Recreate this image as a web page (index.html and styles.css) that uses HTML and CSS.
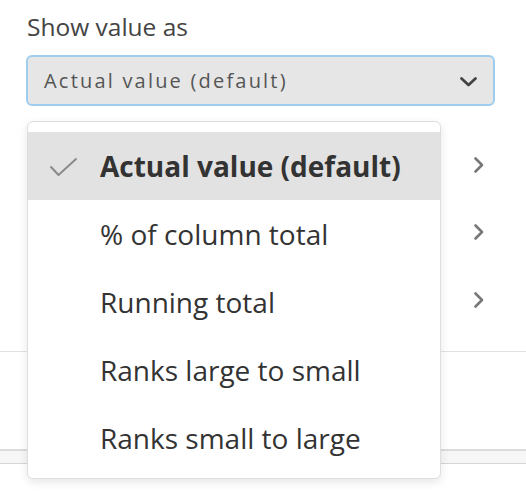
FILE: index.html
```html
<!DOCTYPE html>
<html lang="en">
<head>
<meta charset="utf-8">
<title>Show value as</title>
<link rel="stylesheet" href="styles.css">
</head>
<body>
<div class="panel">
  <div class="field">
    <div class="label">Show value as</div>
    <div class="select">
      <span class="select-text">Actual value (default)</span>
      <svg class="select-caret" width="20" height="12" viewBox="0 0 20 12"><polyline points="2.5,2.5 9.5,9 16.5,2.5" fill="none" stroke="#444" stroke-width="2.8" stroke-linecap="round" stroke-linejoin="round"/></svg>
    </div>
  </div>

  <div class="rows">
    <div class="row"><svg class="row-arrow" width="12" height="18" viewBox="0 0 12 18"><polyline points="2.5,2.5 9,9 2.5,15.5" fill="none" stroke="#777" stroke-width="2.6" stroke-linecap="round" stroke-linejoin="round"/></svg></div>
    <div class="row"><svg class="row-arrow" width="12" height="18" viewBox="0 0 12 18"><polyline points="2.5,2.5 9,9 2.5,15.5" fill="none" stroke="#777" stroke-width="2.6" stroke-linecap="round" stroke-linejoin="round"/></svg></div>
    <div class="row"><svg class="row-arrow" width="12" height="18" viewBox="0 0 12 18"><polyline points="2.5,2.5 9,9 2.5,15.5" fill="none" stroke="#777" stroke-width="2.6" stroke-linecap="round" stroke-linejoin="round"/></svg></div>
  </div>

  <div class="section"></div>
  <div class="footer"></div>

  <ul class="menu">
    <li class="menu-item is-selected">
      <svg class="check" width="30" height="22" viewBox="0 0 30 22"><polyline points="2,10 9.5,18 27,2" fill="none" stroke="#8a8a8a" stroke-width="2" stroke-linecap="round" stroke-linejoin="round"/></svg>
      <span>Actual value (default)</span>
    </li>
    <li class="menu-item"><span>% of column total</span></li>
    <li class="menu-item"><span>Running total</span></li>
    <li class="menu-item"><span>Ranks large to small</span></li>
    <li class="menu-item"><span>Ranks small to large</span></li>
  </ul>
</div>
</body>
</html>
```

FILE: styles.css
```css
* {
  box-sizing: border-box;
}

html, body {
  margin: 0;
  background: #fff;
}

body {
  font-family: "Open Sans", "Noto Sans", sans-serif;
  color: #333;
}

.panel {
  position: relative;
  width: 526px;
  height: 496px;
  overflow: hidden;
}

.field {
  padding: 12px 31px 0 26px;
}

.label {
  font-size: 24.5px;
  line-height: 30px;
  color: #444;
  padding-left: 1px;
}

.select {
  margin-top: 13px;
  height: 51px;
  border: 2px solid #9fcdef;
  border-radius: 6px;
  background: #e6e6e6;
  display: flex;
  align-items: center;
  justify-content: space-between;
  padding: 0 14px 0 16px;
}

.select-text {
  font-size: 20px;
  letter-spacing: 2.2px;
  color: #555;
}

.select-caret {
  display: block;
  margin-top: 3px;
}

.rows {
  margin-top: 25px;
}

.row {
  height: 67.5px;
  display: flex;
  align-items: center;
  justify-content: flex-end;
  padding-right: 41px;
}

.row-arrow {
  display: block;
}

.section {
  margin-top: 17px;
  height: 98px;
  border-top: 1px solid #e2e2e2;
}

.footer {
  height: 15px;
  border-top: 2px solid #dcdcdc;
  border-bottom: 1px solid #d6d6d6;
  background: #f7f7f7;
}

.menu {
  position: absolute;
  left: 27px;
  top: 121px;
  width: 414px;
  margin: 0;
  padding: 10px 0 6px;
  list-style: none;
  background: #fff;
  border: 1px solid #dedede;
  border-radius: 6px;
  box-shadow: 0 3px 10px rgba(0, 0, 0, 0.10);
}

.menu-item {
  position: relative;
  height: 68px;
  display: flex;
  align-items: center;
  padding-left: 72px;
  font-size: 28px;
  color: #333;
}

.menu-item.is-selected {
  background: #e2e2e2;
  font-weight: 700;
}

.check {
  position: absolute;
  left: 21px;
  top: 25px;
}
```
